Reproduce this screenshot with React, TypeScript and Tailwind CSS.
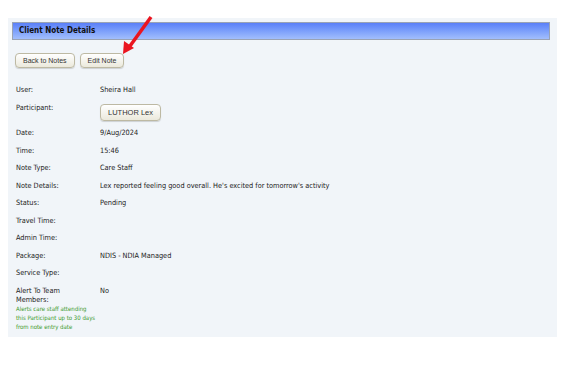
import React from "react";

const rows: { label: string; value?: string; participant?: boolean }[] = [
  { label: "User:", value: "Sheira Hall" },
  { label: "Participant:", participant: true },
  { label: "Date:", value: "9/Aug/2024" },
  { label: "Time:", value: "15:46" },
  { label: "Note Type:", value: "Care Staff" },
  { label: "Note Details:", value: "Lex reported feeling good overall. He's excited for tomorrow's activity" },
  { label: "Status:", value: "Pending" },
  { label: "Travel Time:" },
  { label: "Admin Time:" },
  { label: "Package:", value: "NDIS - NDIA Managed" },
  { label: "Service Type:" },
];

function Btn({ children }: { children: React.ReactNode }) {
  return (
    <button className="h-[15px] px-[7px] rounded-[4px] border border-[#bdb9a3] bg-gradient-to-b from-white to-[#ebe9dc] shadow-[0_1px_1px_rgba(0,0,0,0.15)] text-[7px] leading-none text-[#333] font-['Liberation_Sans',Arial,sans-serif]">
      {children}
    </button>
  );
}

export default function App() {
  return (
    <div className="relative w-[586px] h-[368px] bg-white pt-[18px] pl-[8px] font-['DejaVu_Sans_Condensed','Liberation_Sans',sans-serif] text-[#222]">
      <div className="w-[549px] bg-[#f1f5f9] pt-[4px] pl-[4px] pr-[7px] pb-[6px]">
        <div className="h-[18px] border border-[#9aa3b4] bg-gradient-to-b from-[#5a7ff8] to-[#a2befc] flex items-center pl-[6px]">
          <span className="text-[8px] font-bold text-[#111]">Client Note Details</span>
        </div>

        <div className="flex gap-[5px] pl-[3px] mt-[13px]">
          <Btn>Back to Notes</Btn>
          <Btn>Edit Note</Btn>
        </div>

        <div className="mt-[13.5px] pl-[4px]">
          {rows.map((r) => (
            <div key={r.label} className="grid grid-cols-[84px_1fr] py-[3.75px] text-[7.3px] leading-[10px]">
              <div>{r.label}</div>
              <div>
                {r.participant ? (
                  <button className="mt-[1px] h-[17px] px-[7px] rounded-[4px] border border-[#bdb9a3] bg-gradient-to-b from-white to-[#ebe9dc] shadow-[0_1px_1px_rgba(0,0,0,0.15)] text-[7.5px] leading-none text-[#333] font-['Liberation_Sans',Arial,sans-serif]">
                    LUTHOR Lex
                  </button>
                ) : (
                  r.value
                )}
              </div>
            </div>
          ))}
          <div className="grid grid-cols-[84px_1fr] pt-[3.8px] text-[7.3px] leading-[9px]">
            <div>
              <div className="w-[62px]">Alert To Team Members:</div>
              <div className="text-[6px] leading-[9px] text-[#3c9a2c] w-[82px]">
                Alerts care staff attending this Participant up to 30 days from note entry date
              </div>
            </div>
            <div>No</div>
          </div>
        </div>
      </div>

      <svg className="absolute left-0 top-0 pointer-events-none" width="586" height="368">
        <line x1="151" y1="17" x2="130" y2="46" stroke="#ea1520" strokeWidth="3.5" />
        <polygon points="123,54 124,41 134,48" fill="#ea1520" />
      </svg>
    </div>
  );
}
